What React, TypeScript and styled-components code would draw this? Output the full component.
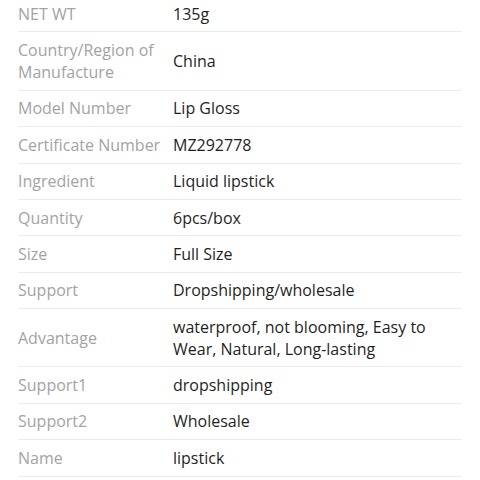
import React from "react";
import styled, { createGlobalStyle } from "styled-components";

const Global = createGlobalStyle`
  html, body { margin: 0; padding: 0; background: #fff; }
  body { font-family: "Open Sans", "Noto Sans", sans-serif; overflow: hidden; }
`;

const Table = styled.div`
  padding: 0 18px;
  margin-top: -4px;
`;

const Row = styled.div`
  display: grid;
  grid-template-columns: 155px 1fr;
  align-items: center;
  padding: 6.7px 0;
  border-bottom: 1px solid #ececec;
  font-size: 16px;
  line-height: 22px;
`;

const Label = styled.div`
  color: #a3a3a3;
  padding-right: 6px;
`;

const Value = styled.div`
  color: #1f1f1f;
`;

const rows: [string, string][] = [
  ["NET WT", "135g"],
  ["Country/Region of Manufacture", "China"],
  ["Model Number", "Lip Gloss"],
  ["Certificate Number", "MZ292778"],
  ["Ingredient", "Liquid lipstick"],
  ["Quantity", "6pcs/box"],
  ["Size", "Full Size"],
  ["Support", "Dropshipping/wholesale"],
  ["Advantage", "waterproof, not blooming, Easy to Wear, Natural, Long-lasting"],
  ["Support1", "dropshipping"],
  ["Support2", "Wholesale"],
  ["Name", "lipstick"],
];

export default function App() {
  return (
    <>
      <Global />
      <Table>
        {rows.map(([k, v]) => (
          <Row key={k}>
            <Label>{k}</Label>
            <Value>{v}</Value>
          </Row>
        ))}
      </Table>
    </>
  );
}
